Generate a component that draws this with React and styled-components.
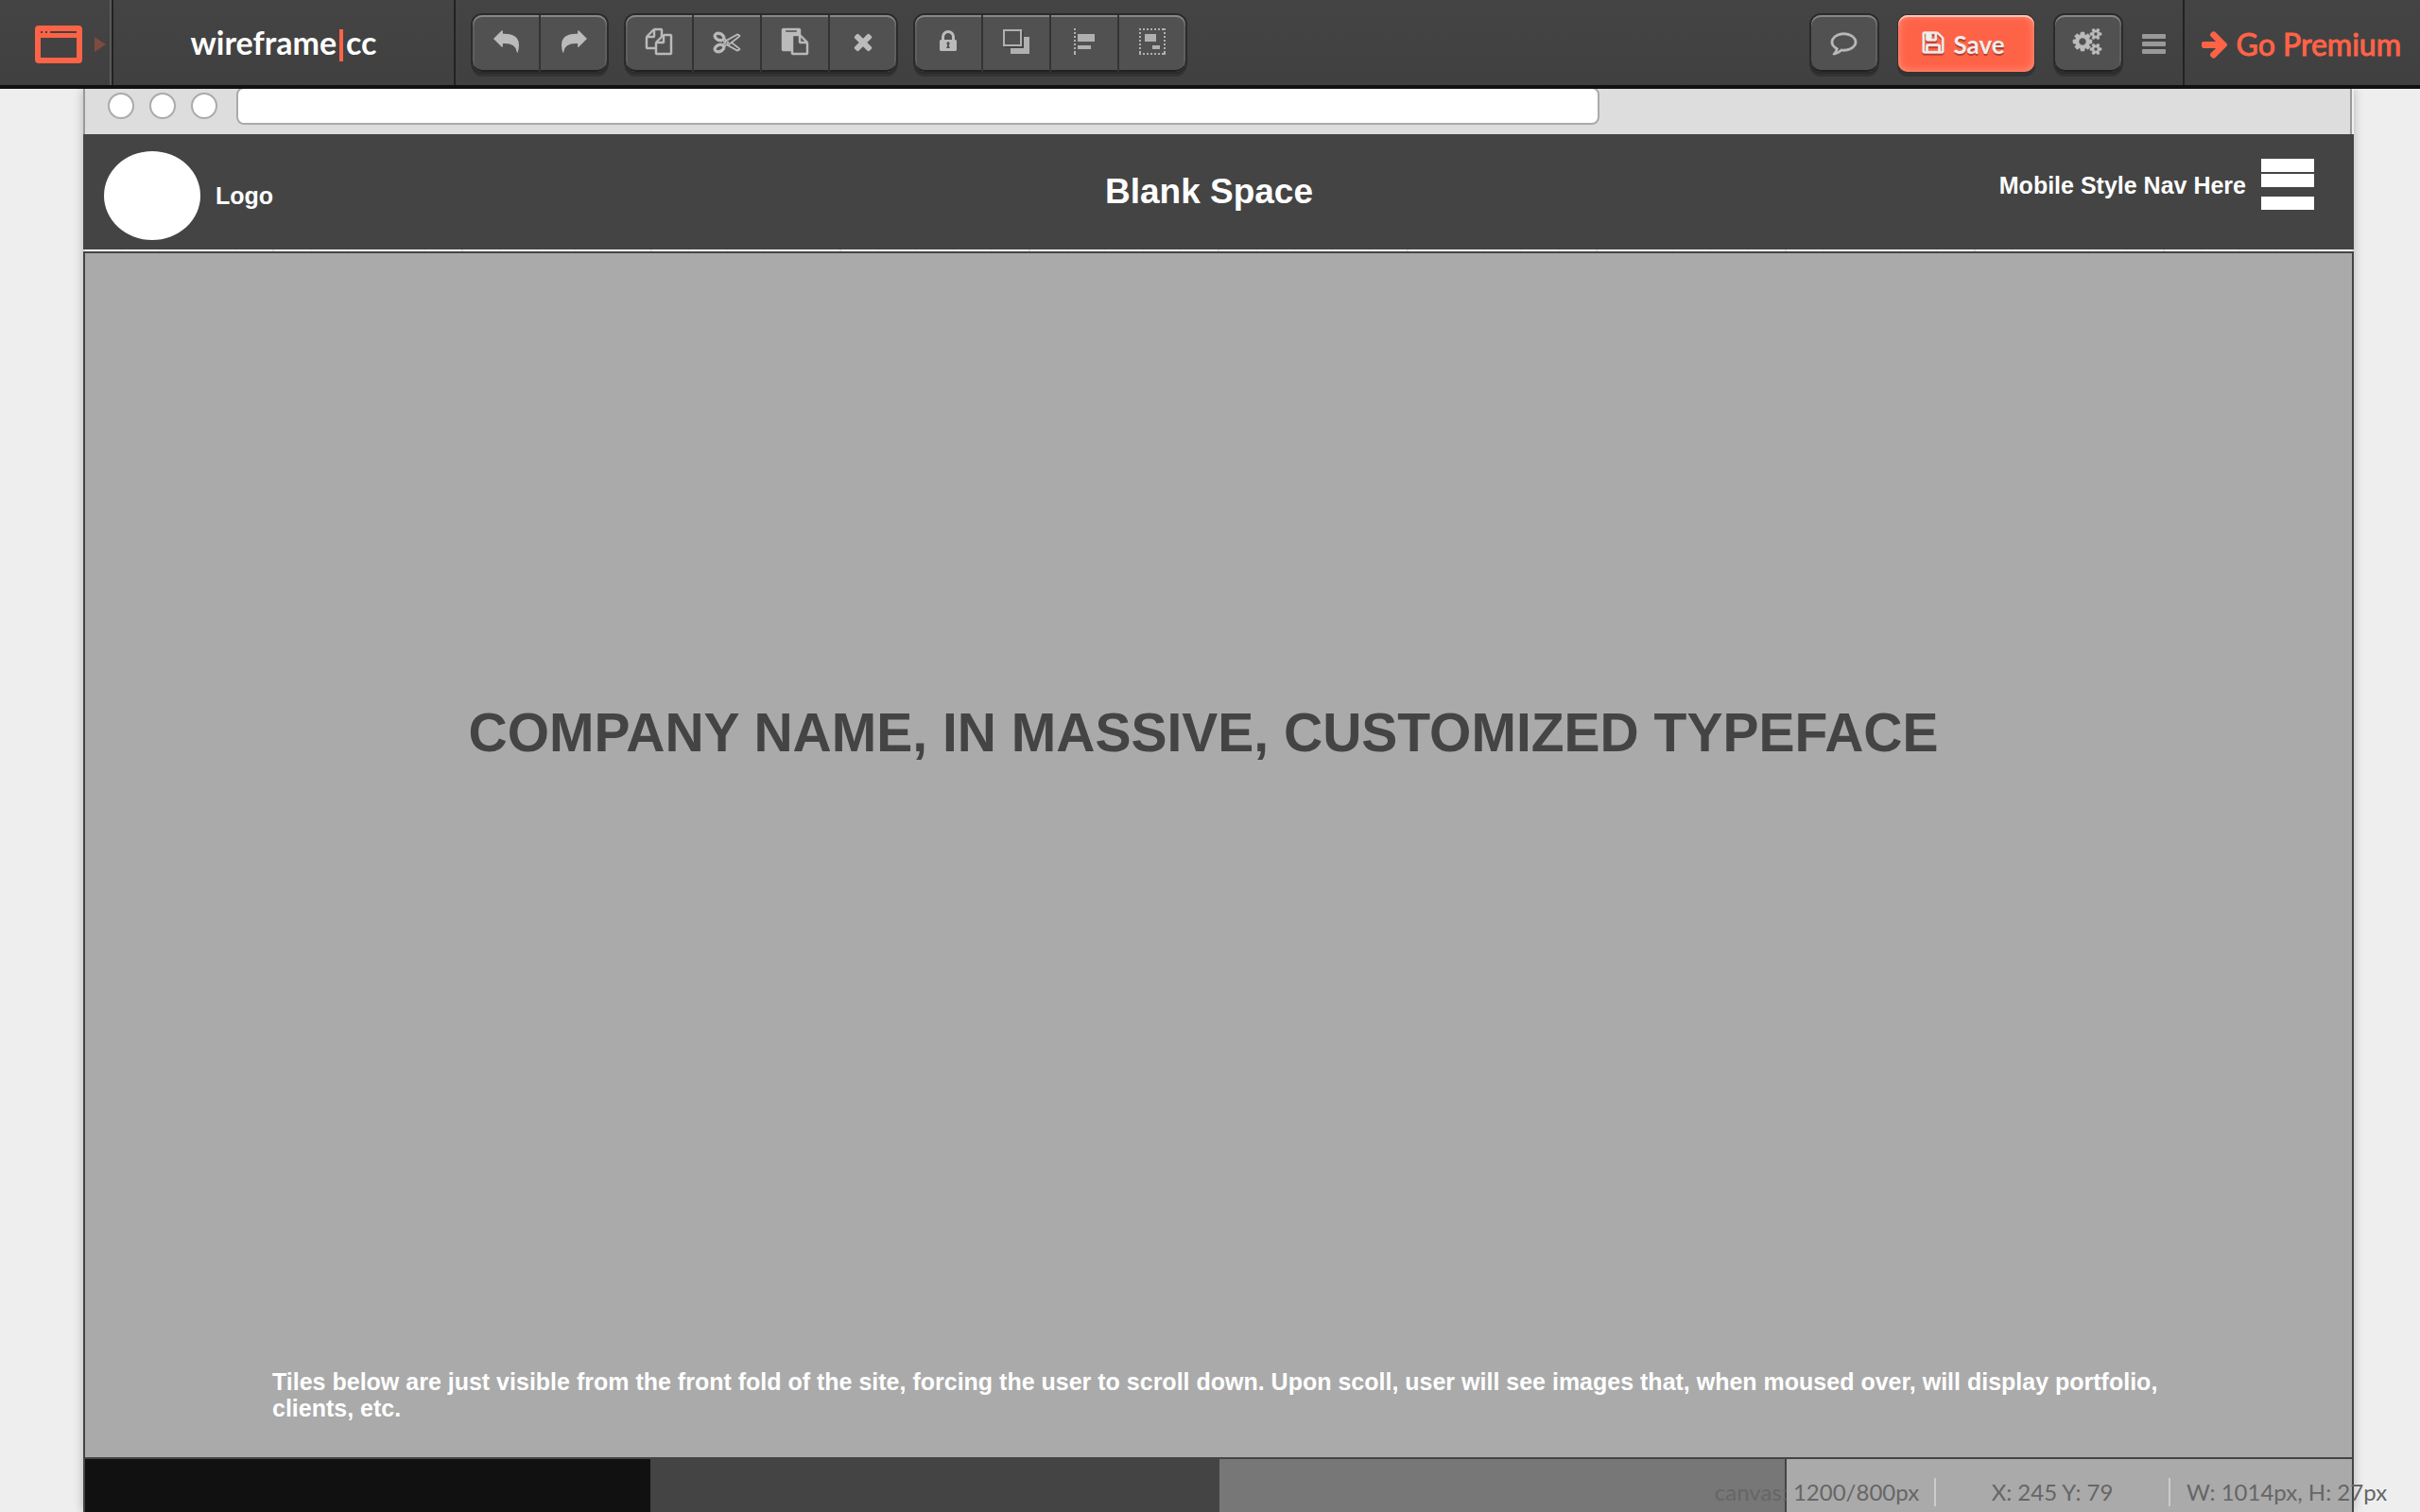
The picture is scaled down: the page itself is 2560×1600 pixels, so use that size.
import React from "react";
import styled, { createGlobalStyle } from "styled-components";

const Global = createGlobalStyle`
  * { box-sizing: border-box; }
  html, body, #root { height: 100%; }
  body {
    margin: 0;
    overflow: hidden;
    background: #eee;
    font-family: "Liberation Sans", Arial, sans-serif;
  }
  h1, h2, p { margin: 0; }
`;

const Page = styled.div`
  position: relative;
  display: flex;
  flex-direction: column;
  height: 100%;
  overflow: hidden;
`;

/* ---------- toolbar ---------- */

const Toolbar = styled.header`
  position: relative;
  z-index: 2;
  flex: none;
  display: flex;
  height: 94px;
  background: linear-gradient(#444, #404040);
  border-bottom: 4px solid #111;
  font-family: Lato, sans-serif;
`;

const DevicePicker = styled.button`
  display: flex;
  align-items: center;
  gap: 13px;
  width: 118px;
  padding: 4px 0 0 37px;
  border: 0;
  border-right: 2px solid #5a5a5a;
  background: none;
  color: #ff6347;
`;

const Brand = styled.a`
  display: flex;
  align-items: center;
  justify-content: center;
  width: 364px;
  border: solid #222;
  border-width: 0 2px;
  color: #fff;
  font-size: 34px;
  font-weight: 700;
  line-height: 42px;
  text-decoration: none;
`;

const Caret = styled.span`
  width: 4px;
  height: 34px;
  margin: 6px 3px 0 3px;
  background: #ff6347;
`;

const Groups = styled.div`
  display: flex;
  align-items: flex-start;
  gap: 20px;
  padding: 16px 18px;
`;

const RightGroups = styled(Groups)`
  gap: 22px;
  margin-left: auto;
`;

const Group = styled.div`
  display: flex;
  gap: 2px;
  border-radius: 10px;
  background: #333;
  box-shadow: 0 0 0 2px #2b2b2b, 0 4px 0 1px #333;
`;

const ToolButton = styled.button`
  display: flex;
  align-items: center;
  justify-content: center;
  width: 70px;
  height: 60px;
  padding: 0 0 4px;
  border: 0;
  background: #515151;
  color: #bbb;
  box-shadow: inset 0 2px 0 #888, inset 0 -2px 0 #222;
  &:first-child {
    border-radius: 10px 0 0 10px;
    box-shadow: inset 0 2px 0 #888, inset 0 -2px 0 #222, inset 2px 0 0 #5f5f5f;
  }
  &:last-child {
    border-radius: 0 10px 10px 0;
    box-shadow: inset 0 2px 0 #888, inset 0 -2px 0 #222, inset -2px 0 0 #5f5f5f;
  }
  &:only-child { border-radius: 10px; }
`;

const SaveButton = styled.button`
  display: flex;
  align-items: center;
  justify-content: center;
  gap: 8px;
  width: 144px;
  height: 60px;
  padding: 0 6px 2px 0;
  border: 0;
  border-radius: 10px;
  background: #ff6347;
  box-shadow: inset 0 2px 0 #ffc4b8, inset 0 0 8px #ff9a87, 0 0 0 1px #333, 0 4px 0 1px #333;
  color: #eee;
  font: 700 26px/32px Lato, sans-serif;
  text-shadow: 0 2px 0 #b5402c;
  svg { filter: drop-shadow(0 2px 0 #b5402c); }
`;

const SaveLabel = styled.span`
  padding-top: 4px;
`;

const MenuButton = styled.button`
  display: flex;
  flex-direction: column;
  justify-content: center;
  gap: 3px;
  width: 25px;
  height: 60px;
  padding: 0;
  border: 0;
  background: none;
`;

const MenuLine = styled.span`
  height: 5px;
  border-radius: 1px;
  background: #999;
`;

const Premium = styled.a`
  display: flex;
  align-items: center;
  gap: 10px;
  padding: 4px 20px 0 18px;
  border-left: 2px solid #222;
  color: #ff6347;
  font-size: 32px;
  line-height: 40px;
  text-decoration: none;
  white-space: nowrap;
  -webkit-text-stroke: 1px #ff6347;
`;

/* ---------- canvas ---------- */

const Canvas = styled.main`
  flex: 1;
  display: flex;
  flex-direction: column;
  min-height: 0;
  margin: 0 70px 0 88px;
  background: #eee;
  box-shadow: 0 0 10px rgba(0, 0, 0, 0.25);
`;

const BrowserBar = styled.div`
  flex: none;
  display: flex;
  align-items: center;
  gap: 16px;
  height: 60px;
  margin: -12px 2px 0 0;
  padding-left: 24px;
  border: solid #999;
  border-width: 0 2px;
  background: #ddd;
`;

const Dot = styled.span`
  width: 28px;
  height: 28px;
  border: 2px solid #aaa;
  border-radius: 50%;
  background: #fff;
`;

const Address = styled.input`
  flex: 0 1 1442px;
  height: 40px;
  margin-left: 4px;
  border: 2px solid #aaa;
  border-radius: 8px;
  background: #fff;
  outline: 0;
`;

const SiteHeader = styled.div`
  flex: none;
  display: grid;
  grid-template-columns: 1fr auto 1fr;
  height: 122px;
  padding: 18px 42px 10px 22px;
  background: #444;
  color: #fff;
  font-size: 25px;
  font-weight: 700;
  line-height: 28px;
`;

const LogoArea = styled.div`
  display: flex;
  align-items: center;
  gap: 16px;
`;

const LogoMark = styled.span`
  width: 102px;
  height: 94px;
  border-radius: 50%;
  background: #fff;
`;

const SiteTitle = styled.h2`
  padding-top: 22px;
  font-size: 37px;
  line-height: 42px;
`;

const NavArea = styled.div`
  display: flex;
  justify-content: flex-end;
  gap: 16px;
  padding-top: 8px;
`;

const NavLabel = styled.span`
  padding-top: 14px;
`;

const NavBars = styled.div`
  display: flex;
  flex-direction: column;
  gap: 2px;
`;

const NavBar = styled.span`
  width: 56px;
  height: 14px;
  background: #fff;
  &:last-child { margin-top: 8px; }
`;

const GridStrip = styled.div`
  flex: none;
  height: 2px;
  background:
    repeating-linear-gradient(90deg, #ddd 0 2px, transparent 2px 200px),
    repeating-linear-gradient(90deg, #eee 0 2px, #fff 2px 40px);
`;

const Hero = styled.section`
  flex: 1;
  display: flex;
  flex-direction: column;
  border: 2px solid #444;
  background: #aaa;
`;

const HeroTitle = styled.h1`
  flex: 1;
  display: flex;
  align-items: center;
  justify-content: center;
  padding: 0 32px 166px 0;
  color: #444;
  font-size: 57px;
  line-height: 64px;
`;

const HeroNote = styled.p`
  padding: 0 198px 38px;
  color: #fff;
  font-size: 25px;
  font-weight: 700;
  line-height: 28px;
`;

const Tiles = styled.div`
  flex: none;
  display: grid;
  grid-template-columns: repeat(4, 1fr);
  gap: 2px;
  height: 56px;
  padding: 0 2px;
  background: #444;
`;

const Tile = styled.div`
  background: ${(p) => p.$tone};
`;

/* ---------- status overlay ---------- */

const Status = styled.footer`
  position: absolute;
  right: 18px;
  bottom: 6px;
  display: flex;
  color: #666;
  font: 24px/30px Lato, sans-serif;
`;

const StatusCell = styled.span`
  width: 248px;
  text-align: center;
  white-space: nowrap;
  & + & { border-left: 2px solid #ccc; }
`;

/* ---------- icons ---------- */

const Icon = ({ d, box = "0 0 1792 1792", w = 28, h = 28, bold = 0 }) => (
  <svg width={w} height={h} viewBox={box} fill="currentColor" overflow="visible" aria-hidden="true">
    <path d={d} fillRule="evenodd" stroke="currentColor" strokeWidth={bold} />
  </svg>
);

const COPY =
  "M1696 384q40 0 68 28t28 68v1216q0 40-28 68t-68 28h-960q-40 0-68-28t-28-68v-288h-544q-40 0-68-28t-28-68v-672q0-40 20-88t48-76l408-408q28-28 76-48t88-20h416q40 0 68 28t28 68v328q68-40 128-40h416zm-544 213l-299 299h299v-299zm-640-384l-299 299h299v-299zm196 647l316-316v-416h-384v416q0 40-28 68t-68 28h-416v640h512v-256q0-40 20-88t48-76zm956 804v-1152h-384v416q0 40-28 68t-68 28h-416v640h896z";
const CUT =
  "M960 896q26 0 45 19t19 45-19 45-45 19-45-19-19-45 19-45 45-19zm300 64l507 398q28 20 25 56-5 35-35 51l-128 64q-13 7-29 7-17 0-31-8l-690-387-110 66q-8 4-12 5 14 49 10 97-7 77-56 147.5t-132 123.5q-132 84-277 84-136 0-222-78-90-84-79-207 7-76 56-147t131-124q132-84 278-84 83 0 151 31 9-13 22-22l122-73-122-73q-13-9-22-22-68 31-151 31-146 0-278-84-82-53-131-124t-56-147q-5-59 15.5-113t63.5-93q85-79 222-79 145 0 277 84 83 52 132 123t56 148q4 48-10 97 4 1 12 5l110 66 690-387q14-8 31-8 16 0 29 7l128 64q30 16 35 51 3 36-25 56zm-681-260q46-42 21-108t-106-117q-92-59-192-59-74 0-113 36-46 42-21 108t106 117q92 59 192 59 74 0 113-36zm-85 745q81-51 106-117t-21-108q-39-36-113-36-100 0-192 59-81 51-106 117t21 108q39 36 113 36 100 0 192-59zm178-613l96 58v-11q0-36 33-56l14-8-79-44-26 26q-3 3-10 11t-12 12q-2 2-4 3.5t-3 2.5zm224 224l96 32 736-576-128-64-768 431v113l-160 96 9 8q2 2 7 6 4 4 11 12t11 12l26 26zm704 416l128-64-520-408-177 138q-2 3-13 7z";
const PASTE =
  "M768 1664h896v-640h-416q-40 0-68-28t-28-68v-416h-384v1152zm256-1440v-64q0-13-9.5-22.5t-22.5-9.5h-704q-13 0-22.5 9.5t-9.5 22.5v64q0 13 9.5 22.5t22.5 9.5h704q13 0 22.5-9.5t9.5-22.5zm256 672h299l-299-299v299zm512 128v672q0 40-28 68t-68 28h-960q-40 0-68-28t-28-68v-160h-544q-40 0-68-28t-28-68v-1344q0-40 28-68t68-28h1088q40 0 68 28t28 68v328q21 13 36 28l408 408q28 28 48 76t20 88z";
const CROSS =
  "M1490 1322q0 40-28 68l-136 136q-28 28-68 28t-68-28l-294-294-294 294q-28 28-68 28t-68-28l-136-136q-28-28-28-68t28-68l294-294-294-294q-28-28-28-68t28-68l136-136q28-28 68-28t68 28l294 294 294-294q28-28 68-28t68 28l136 136q28 28 28 68t-28 68l-294 294 294 294q28 28 28 68z";
const LOCK =
  "M640 768h512v-192q0-106-75-181t-181-75-181 75-75 181v192zm832 96v576q0 40-28 68t-68 28h-960q-40 0-68-28t-28-68v-576q0-40 28-68t68-28h32v-192q0-184 132-316t316-132 316 132 132 316v192h32q40 0 68 28t28 68zM896 920a100 100 0 0 0-64 178v150h-46v100h220v-100h-46v-150a100 100 0 0 0-64-178z";
const COMMENT =
  "M896 384q-204 0-381.5 69.5t-282 187.5-104.5 255q0 112 71.5 213.5t201.5 175.5l87 50-27 96q-24 91-70 172 152-63 275-171l43-38 57 6q69 8 130 8 204 0 381.5-69.5t282-187.5 104.5-255-104.5-255-282-187.5-381.5-69.5zm896 512q0 174-120 321.5t-326 233-450 85.5q-70 0-145-8-198 175-460 242-49 14-114 22h-5q-15 0-27-10.5t-16-27.5v-1q-3-4-.5-12t2-10 4.5-9.5l6-9 7-8.5 8-9q7-8 31-34.5t34.5-38 31-39.5 32.5-51 27-59 26-76q-157-89-247.5-220t-90.5-281q0-174 120-321.5t326-233 450-85.5 450 85.5 326 233 120 321.5z";
const FLOPPY =
  "M512 1536h768v-384h-768v384zm896 0h128v-896q0-14-10-38.5t-20-34.5l-281-281q-10-10-34-20t-39-10v416q0 40-28 68t-68 28h-576q-40 0-68-28t-28-68v-416h-128v1280h128v-416q0-40 28-68t68-28h832q40 0 68 28t28 68v416zm-384-928v-320q0-13-9.5-22.5t-22.5-9.5h-192q-13 0-22.5 9.5t-9.5 22.5v320q0 13 9.5 22.5t22.5 9.5h192q13 0 22.5-9.5t9.5-22.5zm640 32v928q0 40-28 68t-68 28h-1344q-40 0-68-28t-28-68v-1344q0-40 28-68t68-28h928q40 0 88 20t76 48l280 280q28 28 48 76t20 88z";
const COGS =
  "M832 896q0-106-75-181t-181-75-181 75-75 181 75 181 181 75 181-75 75-181zm768 512q0-52-38-90t-90-38-90 38-38 90q0 53 37.5 90.5t90.5 37.5 90.5-37.5 37.5-90.5zm0-1024q0-52-38-90t-90-38-90 38-38 90q0 53 37.5 90.5t90.5 37.5 90.5-37.5 37.5-90.5zm-384 421v185q0 10-7 19.5t-16 10.5l-155 24q-11 35-32 76 34 48 90 115 7 11 7 20 0 12-7 19-23 30-82.5 89.5t-78.5 59.5q-11 0-21-7l-115-90q-37 19-77 31-11 108-23 155-7 24-30 24h-186q-11 0-20-7.5t-10-17.5l-23-153q-34-10-75-31l-118 89q-7 7-20 7-11 0-21-8-144-133-144-160 0-9 7-19 10-14 41-53t47-61q-23-44-35-82l-152-24q-10-1-17-9.5t-7-19.5v-185q0-10 7-19.5t16-10.5l155-24q11-35 32-76-34-48-90-115-7-11-7-20 0-12 7-20 22-30 82-89t79-59q11 0 21 7l115 90q34-18 77-32 11-108 23-154 7-24 30-24h186q11 0 20 7.5t10 17.5l23 153q34 10 75 31l118-89q8-7 20-7 11 0 21 8 144 133 144 160 0 8-7 19-12 16-42 54t-45 60q23 48 34 82l152 23q10 2 17 10.5t7 19.5zm640 533v140q0 16-149 31-12 27-30 52 51 113 51 138 0 4-4 7-122 71-124 71-8 0-46-47t-52-68q-20 2-30 2t-30-2q-14 21-52 68t-46 47q-2 0-124-71-4-3-4-7 0-25 51-138-18-25-30-52-149-15-149-31v-140q0-16 149-31 13-29 30-52-51-113-51-138 0-4 4-7 4-2 35-20t59-34 30-16q8 0 46 46.5t52 67.5q20-2 30-2t30 2q51-71 92-112l6-2q4 0 124 70 4 3 4 7 0 25-51 138 17 23 30 52 149 15 149 31zm0-1024v140q0 16-149 31-12 27-30 52 51 113 51 138 0 4-4 7-122 71-124 71-8 0-46-47t-52-68q-20 2-30 2t-30-2q-14 21-52 68t-46 47q-2 0-124-71-4-3-4-7 0-25 51-138-18-25-30-52-149-15-149-31v-140q0-16 149-31 13-29 30-52-51-113-51-138 0-4 4-7 4-2 35-20t59-34 30-16q8 0 46 46.5t52 67.5q20-2 30-2t30 2q51-71 92-112l6-2q4 0 124 70 4 3 4 7 0 25-51 138 17 23 30 52 149 15 149 31z";
const ARROW =
  "M1600 960q0 54-37 91l-651 651q-39 37-91 37-51 0-90-37l-75-75q-38-38-38-91t38-91l293-293h-704q-52 0-84.5-37.5t-32.5-90.5v-128q0-53 32.5-90.5t84.5-37.5h704l-293-294q-38-36-38-90t38-90l75-75q38-38 90-38 53 0 91 38l651 651q37 35 37 90z";
const UNDO =
  "M0 27L26 1Q30-1 30 4V11Q82 9 82 48Q82 58 78 71Q76 73 75 69Q72 40 30 42V50Q30 56 26 53Z";
const REDO =
  "M82 27L56 1Q52-1 52 4V11Q0 9 0 48Q0 58 4 71Q6 73 7 69Q10 40 52 42V50Q52 56 56 53Z";

const WindowIcon = () => (
  <svg width="50" height="40" viewBox="0 0 50 40" aria-hidden="true">
    <rect width="50" height="40" rx="4" fill="#ff6347" />
    <path d="M6 13h38v21H6zM16 6h28v2H16zM6 6h2v2H6zM11 6h2v2h-2z" fill="#424242" />
  </svg>
);

const ArrangeIcon = () => (
  <svg width="28" height="26" viewBox="0 0 28 26" aria-hidden="true">
    <path d="M8 8h20v18H8z" fill="#b0b0b0" />
    <path d="M2 2h20v18H2z" fill="#444" />
    <path d="M0 0h20v18H0z" fill="#b0b0b0" />
    <path d="M2 2h16v14H2z" fill="#515151" />
  </svg>
);

const AlignIcon = () => (
  <svg width="22" height="28" viewBox="0 0 22 28" fill="#b0b0b0" aria-hidden="true">
    <path d="M4 6h18v8H4zM4 18h14v4H4z" />
    <path d="M1 0v28" stroke="#b0b0b0" strokeWidth="2" strokeDasharray="2 2" />
    <path d="M0 24h2v4H0z" />
  </svg>
);

const GroupIcon = () => (
  <svg width="28" height="28" viewBox="0 0 28 28" fill="#b0b0b0" aria-hidden="true">
    <path d="M6 6h12v8H6zM14 18h8v4h-8z" />
    <path
      d="M0 1h28M0 27h28M1 0v28M27 0v28"
      stroke="#b0b0b0"
      strokeWidth="2"
      strokeDasharray="2 2"
    />
    <path d="M0 24h2v4H0zM26 24h2v4h-2zM26 0h2v2h-2z" />
  </svg>
);

const groups = [
  [
    ["Undo", <Icon d={UNDO} box="0 0 82 72" w={27} h={24} />],
    ["Redo", <Icon d={REDO} box="0 0 82 72" w={27} h={24} />],
  ],
  [
    ["Copy", <Icon d={COPY} bold={30} />],
    ["Cut", <Icon d={CUT} bold={60} />],
    ["Paste", <Icon d={PASTE} bold={30} />],
    ["Delete", <Icon d={CROSS} />],
  ],
  [
    ["Lock", <Icon d={LOCK} />],
    ["Arrange", <ArrangeIcon />],
    ["Align", <AlignIcon />],
    ["Group", <GroupIcon />],
  ],
];

export default function App() {
  return (
    <Page>
      <Global />
      <Toolbar>
        <DevicePicker aria-label="Choose device">
          <WindowIcon />
          <svg width="12" height="16" viewBox="0 0 12 16" aria-hidden="true">
            <path d="M0 0l12 8-12 8z" fill="#7f4a40" />
          </svg>
        </DevicePicker>
        <Brand href="#">
          wireframe
          <Caret />
          cc
        </Brand>
        <Groups>
          {groups.map((group, i) => (
            <Group key={i}>
              {group.map(([name, icon]) => (
                <ToolButton key={name} aria-label={name}>
                  {icon}
                </ToolButton>
              ))}
            </Group>
          ))}
        </Groups>
        <RightGroups>
          <Group>
            <ToolButton aria-label="Comments">
              <Icon d={COMMENT} w={27} h={27} bold={60} />
            </ToolButton>
          </Group>
          <SaveButton>
            <Icon d={FLOPPY} w={26} h={26} bold={60} />
            <SaveLabel>Save</SaveLabel>
          </SaveButton>
          <Group>
            <ToolButton aria-label="Settings">
              <Icon d={COGS} box="0 0 1856 1792" w={29} bold={40} />
            </ToolButton>
          </Group>
          <MenuButton aria-label="Menu">
            <MenuLine />
            <MenuLine />
            <MenuLine />
          </MenuButton>
        </RightGroups>
        <Premium href="#">
          <Icon d={ARROW} box="128 189 1472 1550" w={27} h={29} />
          Go Premium
        </Premium>
      </Toolbar>

      <Canvas>
        <BrowserBar>
          <Dot />
          <Dot />
          <Dot />
          <Address aria-label="Address" />
        </BrowserBar>
        <SiteHeader>
          <LogoArea>
            <LogoMark />
            Logo
          </LogoArea>
          <SiteTitle>Blank Space</SiteTitle>
          <NavArea>
            <NavLabel>Mobile Style Nav Here</NavLabel>
            <NavBars>
              <NavBar />
              <NavBar />
              <NavBar />
            </NavBars>
          </NavArea>
        </SiteHeader>
        <GridStrip />
        <Hero>
          <HeroTitle>COMPANY NAME, IN MASSIVE, CUSTOMIZED TYPEFACE</HeroTitle>
          <HeroNote>
            Tiles below are just visible from the front fold of the site, forcing the user to scroll
            down. Upon scoll, user will see images that, when moused over, will display portfolio,
            clients, etc.
          </HeroNote>
        </Hero>
        <Tiles>
          <Tile $tone="#111" />
          <Tile $tone="#444" />
          <Tile $tone="#777" />
          <Tile $tone="#aaa" />
        </Tiles>
      </Canvas>

      <Status>
        <StatusCell>canvas: 1200/800px</StatusCell>
        <StatusCell>X: 245 Y: 79</StatusCell>
        <StatusCell>W: 1014px, H: 27px</StatusCell>
      </Status>
    </Page>
  );
}
